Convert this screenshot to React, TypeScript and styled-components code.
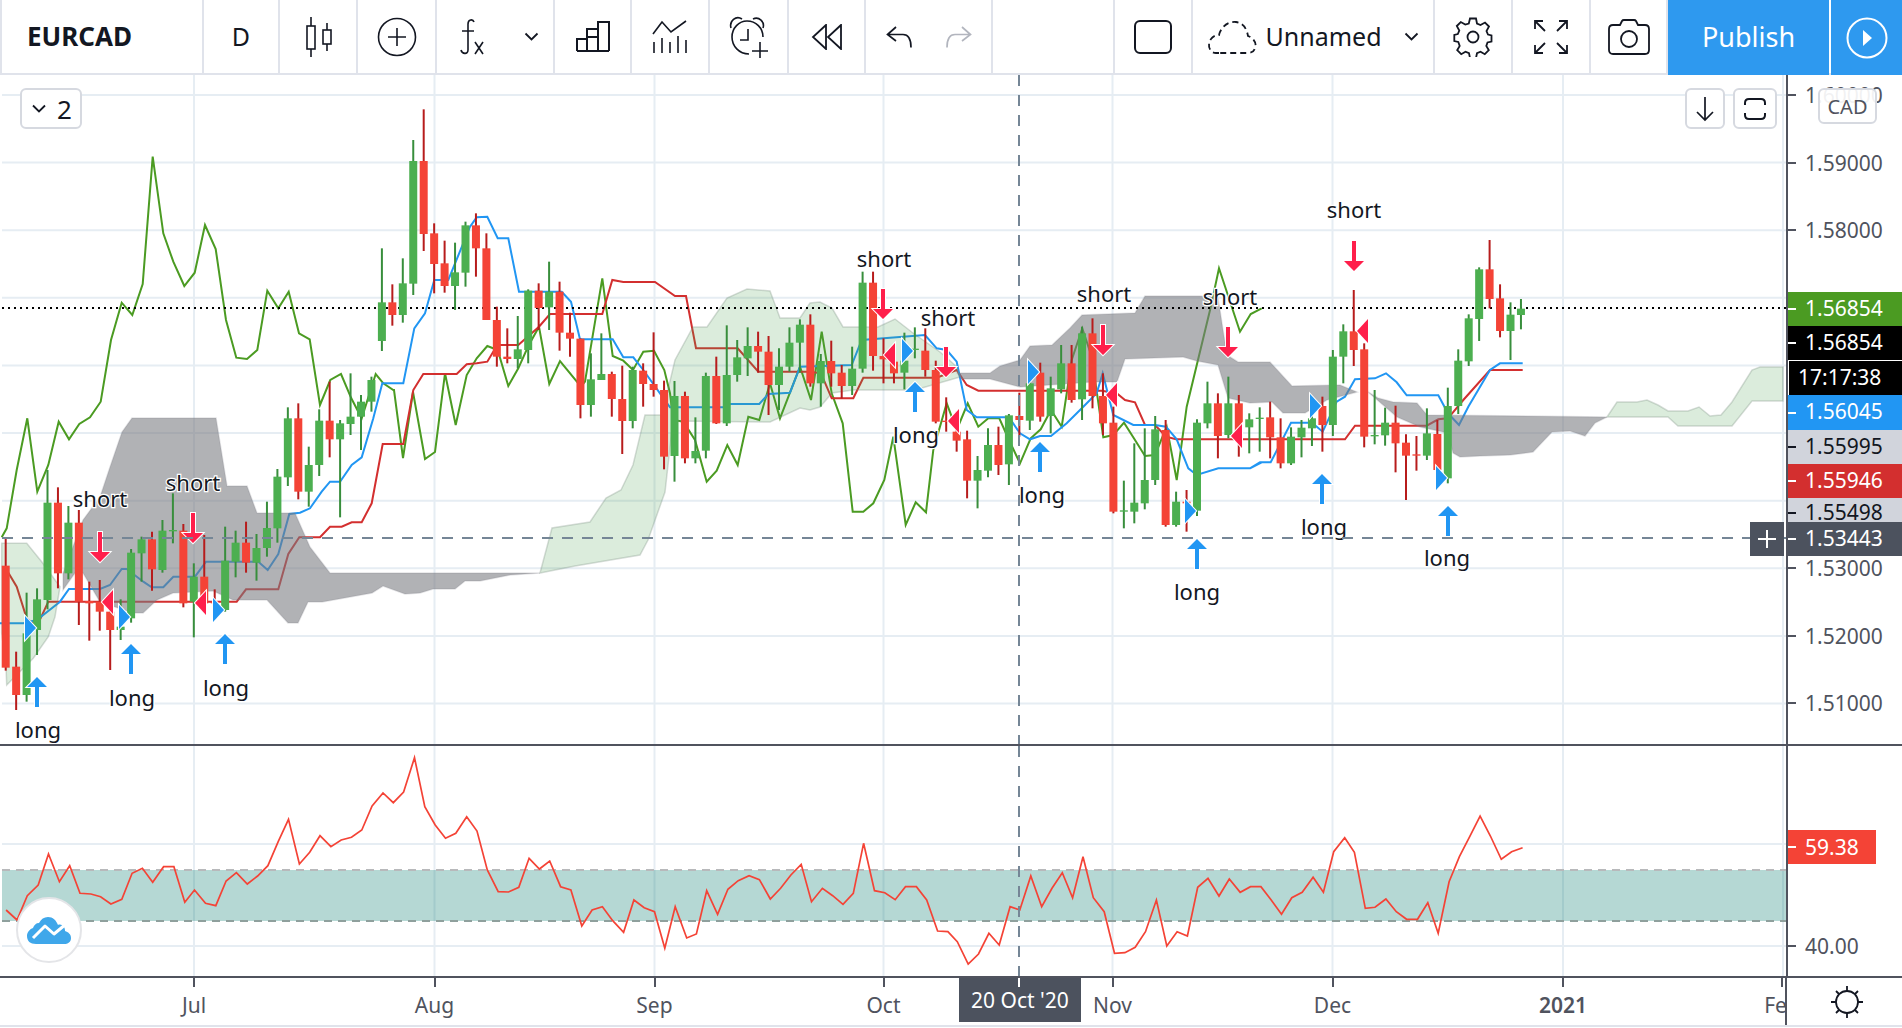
import * as React from 'react'
import styled, { createGlobalStyle } from 'styled-components'

const FONT = `'Noto Sans', 'Open Sans', sans-serif`
const GRID = '#e6edf3'
const BORDER = '#e0e3eb'
const DARK_LINE = '#50535e'

const BAR_STEP = 10.45
const barX = (i: number) => 5.7 + BAR_STEP * i
const priceY = (p: number) => 95 + (1.6 - p) * 6761
const rsiY = (v: number) => 946 - (v - 40) * 5.1

// the readings below were taken from crops, so each list keeps its crop's origin and scale
const crop = (ox: number, oy: number, sx = 3, sy = 3) => (flat: number[]) => {
  const out: number[][] = []
  for (let n = 0; n < flat.length; n += 2) {
    out.push([ox + flat[n] / sx, oy + flat[n + 1] / sy])
  }
  return out
}
const left = crop(0, 400)
const top = crop(0, 100)
const mid = crop(440, 100)
const right = crop(800, 230)
const far = crop(1250, 200)
const real = crop(0, 0, 1, 1)
const pts = (list: number[][]) => list.map(p => `${p[0].toFixed(1)},${p[1].toFixed(1)}`).join(' ')

type CandleRow = [number, number, number, number, number, number]

const rowsAt = (oy: number, rows: CandleRow[]) =>
  rows.map(([i, up, wickTop, bodyTop, bodyBottom, wickBottom]) => ({
    x: barX(i),
    up: up === 1,
    wickTop: oy + wickTop / 3,
    bodyTop: oy + bodyTop / 3,
    bodyBottom: oy + bodyBottom / 3,
    wickBottom: oy + wickBottom / 3
  }))

const candles = [
  ...rowsAt(400, [
    [0, 0, 415, 497, 803, 812],
    [1, 0, 755, 800, 885, 930],
    [2, 1, 578, 700, 885, 905],
    [3, 1, 565, 598, 690, 765],
    [4, 1, 210, 308, 600, 628],
    [5, 0, 262, 308, 520, 565],
    [6, 1, 318, 368, 520, 538],
    [7, 0, 330, 368, 605, 675],
    [8, 0, 545, 603, 610, 722],
    [9, 0, 540, 605, 635, 692],
    [10, 0, 600, 635, 690, 810],
    [11, 1, 598, 680, 690, 720],
    [12, 1, 447, 458, 655, 668],
    [13, 1, 410, 418, 460, 545],
    [14, 0, 395, 418, 508, 572],
    [15, 1, 360, 392, 510, 518],
    [16, 1, 280, 390, 394, 430],
    [17, 0, 372, 392, 610, 622],
    [18, 1, 490, 530, 605, 712],
    [19, 0, 405, 530, 610, 630],
    [20, 0, 568, 605, 610, 640],
    [21, 1, 380, 482, 630, 635],
    [22, 1, 392, 428, 485, 532],
    [23, 0, 365, 428, 488, 518],
    [24, 1, 402, 444, 488, 542],
    [25, 1, 305, 384, 444, 470],
    [26, 1, 207, 230, 385, 428],
    [27, 1, 22, 55, 232, 258],
    [28, 0, 10, 55, 275, 298],
    [29, 1, 140, 195, 275, 320],
    [30, 1, 28, 62, 195, 228],
    [31, 0, -55, 62, 118, 172],
    [32, 1, 60, 70, 118, 352],
    [33, 1, -80, 50, 72, 105],
    [34, 1, -15, 5, 50, 150],
    [35, 1, -70, -60, 5, 35]
  ]),
  ...rowsAt(100, [
    [36, 1, 445, 607, 723, 753],
    [37, 0, 553, 607, 645, 677],
    [38, 1, 475, 550, 645, 668],
    [39, 1, 120, 183, 551, 585],
    [40, 0, 28, 183, 402, 453],
    [41, 0, 370, 400, 492, 580],
    [42, 0, 422, 490, 558, 578],
    [43, 1, 428, 517, 558, 630],
    [44, 1, 365, 376, 518, 560],
    [45, 0, 340, 376, 445, 530],
    [46, 0, 400, 445, 660, 660],
    [47, 0, 620, 660, 770, 800],
    [48, 0, 685, 770, 777, 790],
    [49, 1, 648, 748, 777, 805],
    [50, 1, 568, 572, 750, 790],
    [51, 0, 550, 572, 624, 690],
    [52, 1, 485, 575, 622, 690],
    [53, 0, 545, 575, 698, 752],
    [54, 0, 638, 698, 716, 770],
    [55, 0, 715, 716, 915, 955],
    [56, 1, 760, 838, 915, 950],
    [57, 1, 700, 822, 840, 840],
    [58, 0, 815, 822, 897, 950],
    [59, 0, 797, 897, 963, 1062],
    [60, 1, 800, 810, 963, 985],
    [61, 0, 790, 812, 852, 920],
    [62, 0, 697, 852, 870, 890],
    [63, 0, 842, 870, 1070, 1108],
    [64, 1, 843, 888, 1068, 1145],
    [65, 0, 875, 888, 1075, 1090],
    [66, 1, 952, 1053, 1075, 1090],
    [67, 1, 818, 828, 1052, 1075],
    [68, 0, 770, 828, 970, 972],
    [69, 1, 676, 825, 970, 978],
    [70, 1, 720, 772, 825, 845],
    [71, 1, 682, 738, 775, 828],
    [72, 0, 695, 738, 755, 818],
    [73, 0, 708, 755, 855, 945],
    [74, 1, 745, 800, 855, 930],
    [75, 1, 682, 728, 800, 815],
    [76, 1, 658, 674, 728, 818],
    [77, 0, 643, 674, 850, 860],
    [78, 1, 762, 783, 850, 920],
    [79, 0, 722, 783, 820, 860],
    [80, 0, 795, 818, 858, 895],
    [81, 1, 740, 806, 858, 885],
    [82, 1, 515, 548, 806, 818],
    [83, 0, 515, 548, 768, 812]
  ]),
  ...rowsAt(230, [
    [84, 0, 325, 378, 388, 460],
    [85, 0, 370, 395, 430, 460],
    [86, 1, 308, 392, 428, 478],
    [87, 1, 292, 356, 360, 385],
    [88, 0, 295, 362, 420, 440],
    [89, 0, 392, 420, 575, 580],
    [90, 0, 502, 572, 576, 605],
    [91, 0, 545, 605, 632, 665],
    [92, 0, 602, 628, 752, 805],
    [93, 1, 678, 720, 752, 835],
    [94, 1, 595, 645, 722, 742],
    [95, 0, 590, 645, 705, 735],
    [96, 1, 552, 556, 703, 765],
    [97, 0, 488, 558, 570, 620],
    [98, 1, 400, 460, 572, 600],
    [99, 0, 398, 428, 560, 575],
    [100, 1, 440, 475, 558, 610],
    [101, 1, 345, 400, 478, 490],
    [102, 0, 345, 400, 510, 518],
    [103, 1, 290, 310, 508, 570],
    [104, 0, 265, 310, 498, 535],
    [105, 0, 430, 498, 580, 615],
    [106, 0, 530, 578, 845, 850],
    [107, 1, 752, 841, 845, 895],
    [108, 1, 640, 818, 845, 880],
    [109, 1, 595, 750, 820, 838],
    [110, 1, 558, 598, 750, 765],
    [111, 0, 570, 600, 885, 890],
    [112, 1, 785, 815, 885, 890],
    [113, 0, 780, 815, 820, 905],
    [114, 1, 568, 578, 842, 858],
    [115, 1, 455, 520, 580, 595],
    [116, 0, 490, 520, 618, 685],
    [117, 1, 440, 520, 615, 625],
    [118, 0, 495, 520, 612, 680]
  ]),
  ...rowsAt(200, [
    [119, 1, 640, 658, 682, 760],
    [120, 1, 622, 653, 657, 755],
    [121, 0, 605, 652, 712, 775],
    [122, 0, 655, 712, 790, 805],
    [123, 1, 682, 710, 790, 795],
    [124, 1, 660, 683, 712, 772],
    [125, 1, 640, 655, 685, 738],
    [126, 0, 590, 618, 675, 755],
    [127, 1, 450, 470, 675, 708],
    [128, 1, 373, 394, 470, 550],
    [129, 0, 270, 394, 450, 498],
    [130, 0, 430, 448, 710, 742],
    [131, 1, 570, 705, 709, 733],
    [132, 1, 623, 668, 706, 737],
    [133, 0, 617, 668, 730, 817],
    [134, 0, 703, 728, 767, 900],
    [135, 0, 708, 763, 767, 812],
    [136, 1, 625, 700, 767, 780],
    [137, 0, 660, 702, 810, 840],
    [138, 1, 563, 618, 835, 850],
    [139, 1, 448, 482, 618, 642],
    [140, 1, 343, 355, 484, 498],
    [141, 1, 202, 208, 357, 423],
    [142, 0, 120, 208, 297, 325],
    [143, 0, 253, 295, 393, 412],
    [144, 1, 307, 344, 393, 480],
    [145, 1, 297, 326, 345, 388]
  ])
]

const chikou = [
  ...left([5, 412, 20, 385, 50, 210, 82, 55, 112, 275, 145, 195, 176, 65, 207, 118, 238, 72, 270, 52]),
  ...top([302, 905, 333, 720, 365, 608, 397, 645, 428, 552, 458, 170, 490, 400, 520, 485, 553, 558, 584, 518, 615, 375, 647, 447, 678, 660, 709, 773, 741, 777, 772, 750, 802, 572, 835, 625, 866, 575, 897, 700, 929, 718, 960, 915, 991, 840, 1023, 822, 1054, 895, 1085, 955, 1127, 822, 1150, 850, 1180, 870]),
  ...real([394, 390, 403, 458, 413, 392, 425, 459, 435, 452]),
  ...mid([15, 820, 47, 975, 80, 825, 110, 775, 142, 738, 173, 750, 205, 858, 235, 805, 265, 738, 297, 680, 328, 852, 360, 783, 423, 860, 435, 845, 487, 535, 518, 768, 550, 782, 579, 810, 610, 755, 642, 752, 673, 810, 690, 880, 700, 960, 730, 965, 765, 1020, 800, 1145, 830, 1112, 862, 1035, 893, 1095, 925, 950, 958, 960, 990, 850, 1020, 955, 1080, 800, 1113, 900, 1145, 695, 1175, 880, 1208, 970]),
  ...right([158, 845, 190, 845, 220, 820, 253, 750, 280, 620, 317, 885, 347, 817, 378, 847, 400, 660, 440, 520, 470, 600, 503, 520, 535, 590, 565, 565, 598, 565, 627, 630, 660, 700, 692, 625, 722, 598, 753, 540, 785, 590, 815, 390, 847, 295, 875, 380, 910, 622, 940, 615, 972, 578, 1005, 630, 1035, 678, 1065, 675, 1100, 590, 1130, 750, 1160, 530, 1232, 232, 1257, 115, 1320, 305, 1352, 252, 1385, 235])
]

const kijun = [
  ...left([20, 510, 50, 560, 80, 655, 110, 680, 145, 605, 710, 605, 738, 568, 835, 568, 865, 462, 898, 412, 960, 412, 990, 380, 1025, 380, 1055, 367, 1085, 367, 1115, 310, 1148, 132, 1210, 132]),
  ...top([1240, 870, 1270, 822, 1370, 822, 1400, 793]),
  ...mid([110, 790, 142, 785, 172, 735, 235, 735, 297, 680, 330, 642, 487, 642, 517, 540, 550, 546, 645, 546, 705, 588, 738, 588, 768, 745, 893, 745, 955, 815, 1110, 815, 1143, 820, 1175, 895, 1240, 895]),
  ...right([190, 443, 410, 443, 470, 420, 500, 465, 535, 482, 905, 482, 950, 490, 975, 510, 1005, 517, 1035, 585, 1065, 585, 1098, 620, 1128, 628]),
  ...far([0, 718, 285, 718, 315, 677, 530, 677, 565, 658, 594, 655, 640, 600, 720, 510, 818, 510])
]

const tenkan = [
  ...left([0, 670, 70, 670, 110, 660, 180, 605, 207, 567, 300, 567, 330, 555, 365, 507, 380, 507, 430, 545, 455, 562, 490, 562, 520, 530, 585, 530, 618, 485, 775, 485, 803, 510, 835, 462, 868, 342, 900, 338, 930, 325, 965, 275, 990, 245, 1020, 245, 1055, 195, 1085, 172]),
  ...top([1120, 955, 1147, 850, 1210, 850, 1243, 685, 1275, 640, 1303, 540, 1345, 540, 1410, 380]),
  ...mid([110, 352, 142, 350, 173, 415, 205, 415, 237, 575, 365, 575, 393, 605, 420, 718, 518, 718, 550, 772, 580, 772, 610, 810, 660, 880, 690, 922, 850, 922, 870, 912, 958, 912, 985, 882, 1050, 878, 1080, 800]),
  ...right([155, 405, 185, 330, 375, 315, 410, 355, 440, 360, 470, 395, 500, 540, 530, 562, 627, 562, 660, 610, 690, 628, 720, 618, 753, 618, 800, 580, 850, 530, 890, 490, 908, 430, 940, 555, 1000, 585, 1065, 585, 1098, 590, 1130, 628, 1165, 715, 1190, 735, 1255, 715, 1350, 715, 1385, 697]),
  ...far([0, 805, 30, 787, 62, 787, 123, 668, 186, 668, 218, 695, 260, 605, 285, 590, 315, 538, 375, 535, 408, 520, 440, 547, 470, 586, 565, 586, 594, 640, 627, 675, 655, 620, 720, 510, 750, 490, 818, 490])
]

const greenClouds = [
  left([5, 430, 80, 430, 125, 485, 180, 560, 165, 650, 145, 710, 100, 775, 20, 855, 18, 800, 5, 700]),
  real([540, 573, 552, 528, 590, 522, 606, 498, 621, 490, 633, 465, 645, 415, 662, 415, 675, 360, 693, 327, 707, 327, 727, 298, 747, 289, 770, 291, 780, 318, 800, 318, 810, 303, 820, 302, 832, 308, 843, 327, 878, 327, 895, 319, 913, 333, 940, 352, 957, 367, 960, 377, 915, 390, 853, 390, 832, 393, 820, 407, 810, 410, 800, 408, 770, 422, 673, 421, 665, 492, 648, 540, 640, 555, 575, 566]),
  real([1607, 417, 1617, 402, 1637, 402, 1647, 400, 1658, 405, 1668, 411, 1688, 411, 1699, 407, 1710, 416, 1721, 415, 1732, 402, 1752, 370, 1760, 367, 1783, 367, 1783, 401, 1752, 401, 1732, 426, 1678, 426, 1668, 417])
]

const grayClouds = [
  real([63, 573, 83, 520, 100, 497, 110, 467, 122, 432, 132, 418, 216, 418, 227, 486, 247, 486, 257, 513, 295, 513, 310, 547, 330, 573, 540, 573, 510, 575, 480, 581, 465, 581, 455, 589, 433, 589, 420, 593, 405, 594, 383, 586, 372, 593, 322, 602, 308, 602, 298, 623, 288, 623, 267, 600, 233, 600, 213, 591, 173, 593, 157, 600, 143, 613, 133, 613, 100, 602, 83, 573, 75, 573, 63, 590]),
  real([957, 373, 990, 373, 1000, 366, 1020, 360, 1030, 346, 1052, 345, 1070, 328, 1082, 315, 1135, 313, 1145, 296, 1200, 296, 1218, 297, 1223, 330, 1227, 355, 1238, 362, 1270, 362, 1292, 386, 1340, 385, 1357, 392, 1327, 400, 1305, 413, 1283, 413, 1272, 402, 1250, 403, 1228, 398, 1218, 365, 1197, 361, 1183, 357, 1125, 359, 1117, 382, 1093, 382, 1020, 387, 990, 379, 962, 379]),
  real([1368, 392, 1378, 398, 1393, 402, 1417, 403, 1427, 415, 1607, 417, 1595, 423, 1585, 436, 1570, 431, 1552, 432, 1533, 452, 1510, 455, 1480, 456, 1460, 457, 1453, 453, 1448, 433, 1420, 427, 1397, 417])
]

const arrowsUp = [
  { x: 37, tip: 677, lx: 38, ly: 738 },
  { x: 131, tip: 644, lx: 132, ly: 706 },
  { x: 225, tip: 634, lx: 226, ly: 696 },
  { x: 915, tip: 382, lx: 916, ly: 443 },
  { x: 1040, tip: 442, lx: 1042, ly: 503 },
  { x: 1197, tip: 539, lx: 1197, ly: 600 },
  { x: 1322, tip: 474, lx: 1324, ly: 535 },
  { x: 1448, tip: 506, lx: 1447, ly: 566 }
]

const arrowsDown = [
  { x: 100, tip: 562, lx: 100, ly: 507 },
  { x: 193, tip: 543, lx: 193, ly: 491 },
  { x: 883, tip: 319, lx: 884, ly: 267 },
  { x: 946, tip: 377, lx: 948, ly: 326 },
  { x: 1103, tip: 355, lx: 1104, ly: 302 },
  { x: 1228, tip: 357, lx: 1230, ly: 305 },
  { x: 1354, tip: 271, lx: 1354, ly: 218 }
]

const exitsLeft = [
  [102, 602],
  [195, 603],
  [884, 355],
  [948, 421],
  [1106, 395],
  [1231, 436],
  [1357, 331]
]

const exitsRight = [
  [36, 628],
  [130, 617],
  [224, 610],
  [913, 351],
  [1039, 372],
  [1196, 511],
  [1321, 406],
  [1447, 478]
]

const rsiLine = [
  ...crop(0, 730, 1.65, 3)([10, 540, 28, 570, 45, 497, 63, 465, 80, 372, 98, 455, 115, 407, 132, 490, 150, 492, 166, 500, 183, 522, 201, 508, 218, 430, 235, 415, 252, 457, 270, 410, 287, 410, 305, 517, 321, 480, 339, 520, 356, 527, 373, 453, 390, 428, 408, 462, 425, 438, 442, 407, 459, 335, 476, 268, 494, 402, 511, 367, 528, 317, 546, 350, 563, 330, 580, 322, 597, 300, 614, 228, 632, 189, 649, 218, 666, 186, 684, 83, 701, 230, 718, 285, 735, 325, 752, 310, 770, 260, 787, 303, 804, 420, 822, 485, 839, 486, 856, 472, 873, 385, 890, 417, 907, 393, 925, 470, 942, 480, 960, 588, 977, 540, 994, 530, 1011, 572, 1029, 607, 1046, 510, 1063, 533, 1080, 545, 1097, 655, 1114, 530, 1133, 624, 1149, 612, 1166, 482, 1184, 553, 1201, 478, 1218, 452, 1236, 437, 1253, 449, 1271, 507, 1288, 475, 1305, 435, 1322, 403, 1339, 515, 1357, 475, 1374, 497, 1391, 523, 1408, 490, 1425, 340, 1443, 482, 1460, 488, 1477, 509, 1494, 470, 1512, 470, 1529, 510, 1547, 603, 1564, 605]),
  ...crop(950, 730, 1.647, 3)([12, 635, 30, 702, 47, 672, 64, 610, 81, 645, 99, 530, 115, 540, 133, 438, 151, 530, 168, 475, 185, 428, 202, 503, 219, 380, 236, 503, 254, 545, 271, 670, 288, 668, 305, 652, 322, 605, 340, 510, 357, 648, 374, 605, 391, 618, 408, 472, 425, 445, 443, 498, 460, 447, 478, 487, 495, 470, 512, 470, 529, 510, 546, 553, 563, 503, 580, 487, 598, 442, 615, 487, 632, 365, 650, 323, 666, 367, 684, 535, 700, 532, 718, 507, 735, 545, 752, 568, 770, 568, 787, 518, 804, 610, 822, 455, 839, 380, 856, 320, 873, 258, 890, 318, 908, 388, 925, 365, 943, 353])
]

const monthLines = [194, 434.5, 654.5, 883.5, 1112.5, 1332.5, 1563, 1783]
const priceLines = [1.6, 1.59, 1.58, 1.57, 1.56, 1.55, 1.54, 1.53, 1.52, 1.51]

const Global = createGlobalStyle`
  html, body {
    margin: 0;
    padding: 0;
    background: #fff;
    overflow: hidden;
  }
  #root {
    font-family: ${FONT};
    color: #131722;
  }
`

const Page = styled.div`
  width: 1902px;
  height: 1028px;
  display: flex;
  flex-direction: column;
  background: #fff;
  overflow: hidden;
`

const Toolbar = styled.header`
  flex: 0 0 75px;
  display: flex;
  align-items: stretch;
  box-sizing: border-box;
  border-bottom: 2px solid ${BORDER};
  border-left: 2px solid ${BORDER};
`

const Cell = styled.div<{ $w: number; $gap?: number }>`
  flex: 0 0 ${({ $w }) => $w}px;
  box-sizing: border-box;
  display: flex;
  align-items: center;
  justify-content: center;
  gap: ${({ $gap }) => $gap || 0}px;
  border-right: 2px solid ${BORDER};
`

const Spacer = styled.div`
  flex: 1;
  border-right: 2px solid ${BORDER};
`

const Symbol = styled(Cell)`
  justify-content: flex-start;
  padding: 0 0 2px 25px;
  font-size: 26px;
  font-weight: 700;
`

const Interval = styled(Cell)`
  padding-bottom: 2px;
  font-size: 25px;
`

const FormulaCell = styled(Cell)`
  padding-left: 5px;
`

const LayoutName = styled.span`
  padding-bottom: 2px;
  font-size: 25px;
`

const ChevronSlot = styled.span`
  display: flex;
  margin-left: 14px;
`

const PublishButton = styled.div`
  flex: 0 0 161px;
  display: flex;
  align-items: center;
  justify-content: center;
  padding-bottom: 2px;
  background: #2e99ef;
  color: #fff;
  font-size: 27px;
  margin-bottom: -2px;
`

const PlayButton = styled.div`
  flex: 0 0 71px;
  margin-left: 2px;
  margin-bottom: -2px;
  display: flex;
  align-items: center;
  justify-content: center;
  background: #2e99ef;
`

const Row = styled.div<{ $h: number }>`
  flex: 0 0 ${({ $h }) => $h}px;
  display: flex;
  box-sizing: content-box;
  border-bottom: 2px solid ${DARK_LINE};
`

const Pane = styled.div`
  position: relative;
  flex: 0 0 1787px;
  box-sizing: border-box;
  overflow: hidden;
`

const PriceAxis = styled.div`
  position: relative;
  flex: 1;
  border-left: 2px solid ${DARK_LINE};
  margin-left: -1px;
  overflow: hidden;
`

const AxisTick = styled.div<{ $tone: string; $bg: string; $h: number }>`
  position: absolute;
  left: 0;
  right: 0;
  height: ${({ $h }) => $h}px;
  display: flex;
  align-items: center;
  padding-left: 17px;
  font-size: 21px;
  color: ${({ $tone }) => $tone};
  background: ${({ $bg }) => $bg};
  &::before {
    content: '';
    position: absolute;
    left: 0;
    top: 50%;
    width: 8px;
    height: 2px;
    margin-top: -1px;
    background: ${({ $tone }) => $tone};
  }
`

const PriceTag = styled(AxisTick)`
  box-sizing: border-box;
  padding-bottom: 3px;
`

const RsiBadge = styled(AxisTick)`
  right: 26px;
`

const ClockTag = styled.div`
  position: absolute;
  left: 1px;
  right: 0;
  top: 285px;
  height: 35px;
  box-sizing: border-box;
  display: flex;
  align-items: center;
  padding: 0 0 3px 9px;
  font-size: 21px;
  color: #fff;
  background: #000;
  border-top: 1px solid #fff;
`

const CrossPlus = styled.div`
  position: absolute;
  right: 3px;
  top: 447px;
  width: 34px;
  height: 34px;
  display: flex;
  align-items: center;
  justify-content: center;
  background: #4c525e;
`

const ChartButton = styled.div<{ $l?: number; $r?: number }>`
  position: absolute;
  top: 13px;
  left: ${({ $l }) => ($l === undefined ? 'auto' : `${$l}px`)};
  right: ${({ $r }) => ($r === undefined ? 'auto' : `${$r}px`)};
  height: 41px;
  min-width: 40px;
  box-sizing: border-box;
  display: flex;
  align-items: center;
  justify-content: center;
  gap: 9px;
  padding: 0 8px;
  font-size: 26px;
  color: #131722;
  background: #fff;
  border: 2px solid #d6d9e0;
  border-radius: 6px;
`

const CurrencyTag = styled.div`
  position: absolute;
  top: 13px;
  left: 30px;
  width: 59px;
  height: 36px;
  box-sizing: border-box;
  display: flex;
  align-items: center;
  justify-content: center;
  font-size: 20px;
  color: #50535e;
  background: rgba(255, 255, 255, 0.92);
  border: 2px solid #d6d9e0;
  border-radius: 6px;
`

const LogoBadge = styled.div`
  position: absolute;
  left: 16px;
  top: 151px;
  width: 66px;
  height: 66px;
  box-sizing: border-box;
  display: flex;
  align-items: center;
  justify-content: center;
  background: #fff;
  border: 2px solid #e4e5e8;
  border-radius: 50%;
`

const Frame = styled.svg`
  display: block;
`

const MarkerLabel = styled.text`
  font-family: ${FONT};
  font-size: 22px;
  fill: #131722;
  stroke: #fff;
  stroke-width: 2.5px;
  paint-order: stroke;
  text-anchor: middle;
`

const TimeRow = styled.div`
  flex: 0 0 47px;
  display: flex;
  border-bottom: 2px solid ${BORDER};
`

const TimeScale = styled.div`
  position: relative;
  flex: 0 0 1786px;
  overflow: hidden;
`

const MonthTick = styled.div<{ $bold?: boolean }>`
  position: absolute;
  top: 0;
  width: 80px;
  margin-left: -40px;
  text-align: center;
  padding-top: 13px;
  font-size: 21px;
  line-height: 28px;
  font-weight: ${({ $bold }) => ($bold ? 600 : 400)};
  color: #50535e;
  &::before {
    content: '';
    position: absolute;
    left: 39px;
    top: 0;
    width: 2px;
    height: 9px;
    background: ${DARK_LINE};
  }
`

const DateTag = styled.div`
  position: absolute;
  left: 959px;
  top: 0;
  width: 122px;
  height: 44px;
  display: flex;
  align-items: center;
  justify-content: center;
  font-size: 21px;
  color: #fff;
  background: #4c525e;
  &::before {
    content: '';
    position: absolute;
    left: 59px;
    top: 0;
    width: 2px;
    height: 9px;
    background: #fff;
  }
`

const AxisCorner = styled.div`
  flex: 1;
  display: flex;
  align-items: center;
  justify-content: center;
  border-left: 2px solid ${DARK_LINE};
  margin-left: -1px;
  padding-left: 4px;
`

const ICON = { fill: 'none', stroke: '#131722', strokeWidth: 1.6 } as const

const Chevron = ({ w = 15 }: { w?: number }) => (
  <svg width={w} height="9" viewBox="0 0 15 9" {...ICON} strokeWidth={1.8}>
    <path d="M1.5 1.5 7.5 7.5 13.5 1.5" />
  </svg>
)

const CandleIcon = () => (
  <svg width="30" height="42" viewBox="0 0 30 42" {...ICON}>
    <path d="M8 1v9M8 33v8M24 7v7M24 28v7" />
    <rect x="4" y="10" width="8" height="23" />
    <rect x="20" y="14" width="8" height="14" />
  </svg>
)

const AddIcon = () => (
  <svg width="40" height="40" viewBox="0 0 40 40" {...ICON}>
    <circle cx="20" cy="20" r="18.5" />
    <path d="M20 11v18M11 20h18" />
  </svg>
)

const FxIcon = () => (
  <svg width="30" height="38" viewBox="0 0 30 38" {...ICON}>
    <path d="M17 4c-1-3-6-3-6 2v26c0 5-6 4-7 0M5 13h12M18 24l8 12M26 24l-8 12" />
  </svg>
)

const BarsIcon = () => (
  <svg width="34" height="31" viewBox="0 0 34 31" {...ICON} strokeWidth={2}>
    <path d="M1 30V18h10v12M11 30V8h11v22M22 30V1h11v29M1 30h32M12 16h10" />
  </svg>
)

const IndicatorIcon = () => (
  <svg width="36" height="34" viewBox="0 0 36 34" {...ICON}>
    <path d="M1 14 10 2l9 10L34 1M2 33V22M10 33V18M18 33V22M26 33V16M34 33V20" />
  </svg>
)

const AlarmIcon = () => (
  <svg width="40" height="42" viewBox="0 0 40 42" {...ICON}>
    <path d="M20 38C10 38 3 30 3 21 3 12 10 5 18 5c9 0 16 7 16 16M2 12C0 5 7-1 13 3M24 3c6-3 12 3 10 9M19 13v11h-8M31 26v16M23 35h16" />
  </svg>
)

const RewindIcon = () => (
  <svg width="32" height="26" viewBox="0 0 32 26" {...ICON} strokeWidth={1.8}>
    <path d="M15 1 2 13l13 12zM30 1 17 13l13 12z" />
  </svg>
)

const TurnIcon = ({ flip, tone }: { flip?: boolean; tone?: string }) => (
  <svg
    width="28"
    height="22"
    viewBox="0 0 28 22"
    fill="none"
    stroke={tone || '#131722'}
    strokeWidth={1.7}
    transform={flip ? 'scale(-1 1)' : undefined}
  >
    <path d="M10 1 1.5 8.5 10 15M2 8.5h15c5 0 8 4 8 13" />
  </svg>
)

const SquareIcon = () => (
  <svg width="38" height="34" viewBox="0 0 38 34" {...ICON} strokeWidth={2}>
    <rect x="1" y="1" width="36" height="32" rx="5" />
  </svg>
)

const CloudIcon = () => (
  <svg width="50" height="34" viewBox="0 0 50 34" {...ICON} strokeDasharray="6 4" strokeWidth={1.8}>
    <path d="M12 33H9C2 33 0 24 4 19c2-3 5-4 8-4 2-8 9-14 17-13 8 1 11 8 12 14 6 2 9 8 7 12-1 4-4 5-8 5H12z" />
  </svg>
)

const GearIcon = () => (
  <svg width="40" height="40" viewBox="0 0 40 40" {...ICON} strokeWidth={1.8}>
    <circle cx="20" cy="20" r="5.5" />
    <path d="M17 1.5h6l1 5 3.5 1.5 4.5-2.500 4 4-2.500 4.500 1.500 3.500 3.500 1v6l-4 1-1.200 3.500 2.500 4.200-4 4-4.300-2.500-3.500 1.500-1 4.800h-6l-1-4.800-3.500-1.500-4.300 2.500-4-4 2.500-4.200L5.300 25l-4-1v-6l3.500-1 1.500-3.500L3.800 9l4-4 4.500 2.500L15.800 6.500z" />
  </svg>
)

const ExpandIcon = () => (
  <svg width="34" height="34" viewBox="0 0 34 34" {...ICON} strokeWidth={1.8}>
    <path d="M1 9V1h8M1 1l10 10M33 9V1h-8M33 1 23 11M1 25v8h8M1 33l10-10M33 25v8h-8M33 33 23 23" />
  </svg>
)

const CameraIcon = () => (
  <svg width="42" height="36" viewBox="0 0 42 36" {...ICON} strokeWidth={1.8}>
    <path d="M12 6l2-4c.4-.7 1-1 2-1h10c1 0 1.600.3 2 1l2 4h7c2.500 0 4 1.500 4 4v21c0 2.500-1.500 4-4 4H5c-2.500 0-4-1.500-4-4V10c0-2.500 1.500-4 4-4z" />
    <circle cx="21" cy="20" r="8" />
  </svg>
)

const PlayIcon = () => (
  <svg width="42" height="42" viewBox="0 0 42 42" fill="none" stroke="#fff" strokeWidth={2}>
    <circle cx="21" cy="21" r="19.500" />
    <path d="M17 13l9 8-9 8z" fill="#fff" stroke="none" />
  </svg>
)

const ArrowDownIcon = () => (
  <svg width="20" height="26" viewBox="0 0 20 26" {...ICON} strokeWidth={1.7}>
    <path d="M10 1v23M2 16l8 8 8-8" />
  </svg>
)

const RestoreIcon = () => (
  <svg width="24" height="24" viewBox="0 0 24 24" {...ICON} strokeWidth={2}>
    <path d="M2 8V6c0-3 1-4 4-4h12c3 0 4 1 4 4v2M2 16v2c0 3 1 4 4 4h12c3 0 4-1 4-4v-2" />
  </svg>
)

const LogoIcon = () => (
  <svg width="44" height="27" viewBox="0 0 44 27">
    <path
      d="M9 27C3 27 0 24 0 19c0-4 3-7 6-8 1-3 3-5 6-5 2-4 5-6 9-6 5 0 8 3 10 8 2-1 5 0 6 2 1 2 1 3 1 4 3 1 6 3 6 7 0 4-3 6-7 6z"
      fill="#3fa7ea"
    />
    <path d="M6 21 18 9l9 8 12-10" fill="none" stroke="#fff" strokeWidth={3} strokeLinejoin="round" />
  </svg>
)

const SunIcon = () => (
  <svg width="34" height="34" viewBox="0 0 34 34" {...ICON} strokeWidth={1.8}>
    <circle cx="17" cy="17" r="11" />
    <path d="M17 1v5M17 28v5M1 17h5M28 17h5M6 6l3 3M25 25l3 3M6 28l3-3M25 9l3-3" />
  </svg>
)

const CrossIcon = () => (
  <svg width="20" height="20" viewBox="0 0 20 20" stroke="#fff" strokeWidth={2}>
    <path d="M10 1v18M1 10h18" />
  </svg>
)

const Grid = ({ ys, y1, y2 }: { ys: number[]; y1: number; y2: number }) => (
  <g stroke={GRID} strokeWidth={2}>
    {ys.map(y => (
      <line key={y} x1={2} x2={1787} y1={y} y2={y} />
    ))}
    {monthLines.map(x => (
      <line key={x} x1={x} x2={x} y1={y1} y2={y2} />
    ))}
  </g>
)

function MainChart() {
  return (
    <Frame width={1787} height={669} viewBox="0 75 1787 669">
      <Grid ys={priceLines.map(priceY)} y1={75} y2={744} />
      <polyline points={pts(chikou)} fill="none" stroke="#4b9b22" strokeWidth={2} />
      <polyline points={pts(kijun)} fill="none" stroke="#d32f2f" strokeWidth={2} />
      <polyline points={pts(tenkan)} fill="none" stroke="#2196f3" strokeWidth={2} />
      {greenClouds.map((c, n) => (
        <polygon key={n} points={pts(c)} fill="rgba(76,160,80,0.2)" stroke="rgba(120,140,125,0.3)" strokeWidth={1.5} />
      ))}
      {grayClouds.map((c, n) => (
        <polygon key={n} points={pts(c)} fill="rgba(120,122,128,0.58)" stroke="rgba(120,122,128,0.2)" strokeWidth={1.5} />
      ))}
      <line x1={2} x2={1787} y1={308} y2={308} stroke="#000" strokeWidth={2} strokeDasharray="2 4" />
      {candles.map((c, n) => (
        <g key={n}>
          <line x1={c.x} x2={c.x} y1={c.wickTop} y2={c.wickBottom} stroke={c.up ? '#388e3c' : '#b71c1c'} strokeWidth={2} />
          <rect x={c.x - 4} y={c.bodyTop} width={8} height={c.bodyBottom - c.bodyTop} fill={c.up ? '#4caf50' : '#f44336'} />
        </g>
      ))}
      <g stroke="#fff" strokeWidth={2} paintOrder="stroke">
        {arrowsUp.map(a => (
          <polygon
            key={a.x}
            fill="#2196f3"
            points={pts(real([a.x, a.tip, a.x + 10, a.tip + 10, a.x + 2, a.tip + 10, a.x + 2, a.tip + 30, a.x - 2, a.tip + 30, a.x - 2, a.tip + 10, a.x - 10, a.tip + 10]))}
          />
        ))}
        {arrowsDown.map(a => (
          <polygon
            key={a.x}
            fill="#ff1f4b"
            points={pts(real([a.x, a.tip, a.x + 10, a.tip - 10, a.x + 2, a.tip - 10, a.x + 2, a.tip - 30, a.x - 2, a.tip - 30, a.x - 2, a.tip - 10, a.x - 10, a.tip - 10]))}
          />
        ))}
        {exitsLeft.map(([x, y]) => (
          <polygon key={x} fill="#ff1f4b" points={pts(real([x, y, x + 11, y - 12, x + 11, y + 12]))} />
        ))}
        {exitsRight.map(([x, y]) => (
          <polygon key={x} fill="#2196f3" points={pts(real([x, y, x - 11, y - 12, x - 11, y + 12]))} />
        ))}
      </g>
      {arrowsUp.map(a => (
        <MarkerLabel key={a.x} x={a.lx} y={a.ly}>
          long
        </MarkerLabel>
      ))}
      {arrowsDown.map(a => (
        <MarkerLabel key={a.x} x={a.lx} y={a.ly}>
          short
        </MarkerLabel>
      ))}
      <line x1={2} x2={1787} y1={538} y2={538} stroke="#758696" strokeWidth={2} strokeDasharray="11 9" />
      <line x1={1019} x2={1019} y1={75} y2={744} stroke="#758696" strokeWidth={2} strokeDasharray="11 9" />
    </Frame>
  )
}

function RsiChart() {
  return (
    <Frame width={1787} height={230} viewBox="0 746 1787 230">
      <Grid ys={[844, 946]} y1={746} y2={976} />
      <rect x={2} y={870} width={1785} height={51} fill="rgba(0,121,107,0.29)" />
      <line x1={2} x2={1787} y1={870} y2={870} stroke="#b8b9bb" strokeWidth={2} strokeDasharray="8 6" />
      <line x1={2} x2={1787} y1={921} y2={921} stroke="#8fa09d" strokeWidth={2} strokeDasharray="8 6" />
      <polyline points={pts(rsiLine)} fill="none" stroke="#f44336" strokeWidth={1.7} />
      <line x1={1019} x2={1019} y1={746} y2={976} stroke="#758696" strokeWidth={2} strokeDasharray="11 9" />
    </Frame>
  )
}

const mainTicks = [
  { p: 1.6, label: '1.60000' },
  { p: 1.59, label: '1.59000' },
  { p: 1.58, label: '1.58000' },
  { p: 1.53, label: '1.53000' },
  { p: 1.52, label: '1.52000' },
  { p: 1.51, label: '1.51000' }
]

const priceTags = [
  { top: 217, h: 34, bg: '#4b9b22', tone: '#fff', label: '1.56854' },
  { top: 251, h: 34, bg: '#000', tone: '#fff', label: '1.56854' },
  { top: 320, h: 35, bg: '#2196f3', tone: '#fff', label: '1.56045' },
  { top: 355, h: 34, bg: '#d1d4dc', tone: '#131722', label: '1.55995' },
  { top: 389, h: 34, bg: '#d32f2f', tone: '#fff', label: '1.55946' },
  { top: 423, h: 30, bg: '#d1d4dc', tone: '#131722', label: '1.55498' },
  { top: 447, h: 34, bg: '#4c525e', tone: '#fff', label: '1.53443' }
]

const months = [
  { x: 194, label: 'Jul' },
  { x: 434.5, label: 'Aug' },
  { x: 654.5, label: 'Sep' },
  { x: 883.5, label: 'Oct' },
  { x: 1112.5, label: 'Nov' },
  { x: 1332.5, label: 'Dec' },
  { x: 1563, label: '2021', bold: true },
  { x: 1782, label: 'Feb' }
]

export default function App() {
  return (
    <Page>
      <Global />
      <Toolbar>
        <Symbol $w={202}>EURCAD</Symbol>
        <Interval $w={76}>D</Interval>
        <Cell $w={78}>
          <CandleIcon />
        </Cell>
        <Cell $w={79}>
          <AddIcon />
        </Cell>
        <FormulaCell $w={118} $gap={37}>
          <FxIcon />
          <Chevron />
        </FormulaCell>
        <Cell $w={77}>
          <BarsIcon />
        </Cell>
        <Cell $w={78}>
          <IndicatorIcon />
        </Cell>
        <Cell $w={79}>
          <AlarmIcon />
        </Cell>
        <Cell $w={77}>
          <RewindIcon />
        </Cell>
        <Cell $w={127} $gap={30}>
          <TurnIcon />
          <TurnIcon flip tone="#b2b5be" />
        </Cell>
        <Spacer />
        <Cell $w={78}>
          <SquareIcon />
        </Cell>
        <Cell $w={242} $gap={8}>
          <CloudIcon />
          <LayoutName>Unnamed</LayoutName>
          <ChevronSlot>
            <Chevron />
          </ChevronSlot>
        </Cell>
        <Cell $w={78}>
          <GearIcon />
        </Cell>
        <Cell $w={78}>
          <ExpandIcon />
        </Cell>
        <Cell $w={77}>
          <CameraIcon />
        </Cell>
        <PublishButton>Publish</PublishButton>
        <PlayButton>
          <PlayIcon />
        </PlayButton>
      </Toolbar>
      <Row $h={669}>
        <Pane>
          <MainChart />
          <ChartButton $l={20}>
            <Chevron w={18} />2
          </ChartButton>
          <ChartButton $r={62}>
            <ArrowDownIcon />
          </ChartButton>
          <ChartButton $r={10}>
            <RestoreIcon />
          </ChartButton>
          <CrossPlus>
            <CrossIcon />
          </CrossPlus>
        </Pane>
        <PriceAxis>
          {mainTicks.map(t => (
            <AxisTick key={t.p} $tone="#50535e" $bg="transparent" $h={30} style={{ top: priceY(t.p) - 75 - 15 }}>
              {t.label}
            </AxisTick>
          ))}
          {priceTags.map((t, n) => (
            <PriceTag key={n} $tone={t.tone} $bg={t.bg} $h={t.h} style={{ top: t.top }}>
              {t.label}
            </PriceTag>
          ))}
          <ClockTag>17:17:38</ClockTag>
          <CurrencyTag>CAD</CurrencyTag>
        </PriceAxis>
      </Row>
      <Row $h={230}>
        <Pane>
          <RsiChart />
          <LogoBadge>
            <LogoIcon />
          </LogoBadge>
        </Pane>
        <PriceAxis>
          <RsiBadge $tone="#fff" $bg="#f44336" $h={34} style={{ top: rsiY(59.38) - 746 - 17 }}>
            59.38
          </RsiBadge>
          <AxisTick $tone="#50535e" $bg="transparent" $h={30} style={{ top: rsiY(40) - 746 - 15 }}>
            40.00
          </AxisTick>
        </PriceAxis>
      </Row>
      <TimeRow>
        <TimeScale>
          {months.map(m => (
            <MonthTick key={m.label} $bold={m.bold} style={{ left: m.x }}>
              {m.label}
            </MonthTick>
          ))}
          <DateTag>20 Oct &apos;20</DateTag>
        </TimeScale>
        <AxisCorner>
          <SunIcon />
        </AxisCorner>
      </TimeRow>
    </Page>
  )
}
